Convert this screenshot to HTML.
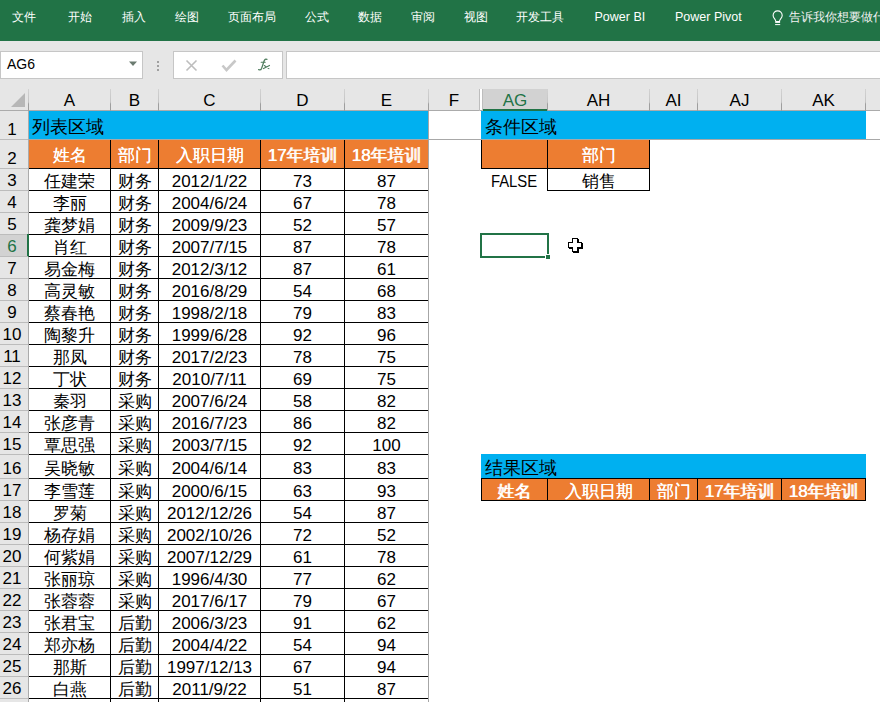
<!DOCTYPE html><html><head><meta charset="utf-8"><style>
html,body{margin:0;padding:0;width:880px;height:702px;overflow:hidden;background:#fff;font-family:"Liberation Sans", sans-serif;}
div{position:absolute;box-sizing:border-box;}
.t{white-space:nowrap;}
.rib{left:0;top:0;width:880px;height:41px;background:#217346;}
.tab{top:1px;height:32px;line-height:32px;font-size:12px;color:#fff;}
.hd{background:#e6e6e6;}
.ch{top:90px;height:21px;font-size:17px;line-height:21px;text-align:center;color:#000;}
.rn{left:0;width:28px;padding-right:4px;font-size:17px;text-align:center;color:#000;}
.c{font-size:16.5px;text-align:center;color:#000;} .n{font-size:17px;}
.w{color:#fff;text-shadow:0.6px 0 0 #fff;}
</style></head><body>
<div class="rib"></div>
<div class="tab t" style="left:12px;">文件</div>
<div class="tab t" style="left:68px;">开始</div>
<div class="tab t" style="left:122px;">插入</div>
<div class="tab t" style="left:174.5px;">绘图</div>
<div class="tab t" style="left:228px;">页面布局</div>
<div class="tab t" style="left:305px;">公式</div>
<div class="tab t" style="left:357.5px;">数据</div>
<div class="tab t" style="left:411px;">审阅</div>
<div class="tab t" style="left:464px;">视图</div>
<div class="tab t" style="left:516px;">开发工具</div>
<div class="tab t" style="left:594.5px;font-size:12.5px;">Power BI</div>
<div class="tab t" style="left:675px;font-size:12.5px;">Power Pivot</div>
<svg style="position:absolute;left:770px;top:8px" width="16" height="20" viewBox="0 0 16 20"><path d="M5.7 13C5.7 11.4 3.1 10 3.1 7.4A4.55 4.55 0 1 1 12.2 7.4C12.2 10 9.6 11.4 9.6 13" fill="none" stroke="#fff" stroke-width="1.1"/><rect x="5.2" y="13" width="4.9" height="1.9" fill="#fff"/><rect x="5.1" y="16.1" width="5.1" height="1" fill="#fff"/></svg>
<div class="tab t" style="left:789px;font-size:12.3px;color:#f2f2f2">告诉我你想要做什么</div>
<div class="hd" style="left:0;top:41px;width:880px;height:48px"></div>
<div style="left:0;top:51px;width:143px;height:28px;background:#fff;border:1px solid #c6c6c6"></div>
<div class="t" style="left:7px;top:50px;height:28px;line-height:28px;font-size:14px;color:#000">AG6</div>
<svg style="position:absolute;left:128px;top:61px" width="10" height="6"><path d="M1 0.5h8L5 5z" fill="#6b7b70"/></svg>
<div style="left:157px;top:61px;width:2px;height:2px;background:#a0a0a0"></div>
<div style="left:157px;top:65px;width:2px;height:2px;background:#a0a0a0"></div>
<div style="left:157px;top:69px;width:2px;height:2px;background:#a0a0a0"></div>
<div style="left:173px;top:51px;width:110px;height:28px;background:#fff;border:1px solid #c6c6c6"></div>
<svg style="position:absolute;left:185px;top:59px" width="14" height="13"><path d="M1.5 1.5l10 10M11.5 1.5l-10 10" stroke="#bdbdbd" stroke-width="1.6"/></svg>
<svg style="position:absolute;left:221px;top:59px" width="16" height="13"><path d="M1.5 6.5l4 4.5L14.5 1.5" fill="none" stroke="#c8c8c8" stroke-width="2.6"/></svg>
<svg style="position:absolute;left:256px;top:56px" width="16" height="16" viewBox="0 0 16 16"><g fill="none" stroke="#4f7d5e" stroke-linecap="round"><path d="M10.9 3.4C9.6 2.8 8.7 3.4 8.2 4.8L5.6 12.4C5.1 13.7 4.2 14.1 2.6 13.7" stroke-width="1.3"/><path d="M5.2 6.3H9.2" stroke-width="1.1"/><path d="M8.3 9.5L12.9 12.6M7.5 12.6L13.5 9.4" stroke-width="1.1"/></g></svg>
<div style="left:286px;top:51px;width:600px;height:28px;background:#fff;border:1px solid #c6c6c6"></div>
<div class="hd" style="left:0;top:89px;width:880px;height:22px"></div>
<div style="left:0;top:110px;width:880px;height:1px;background:#ababab"></div>
<svg style="position:absolute;left:10px;top:92px" width="16" height="16"><path d="M15 1V15H1z" fill="#b7b7b7"/></svg>
<div style="left:28px;top:89px;width:1px;height:22px;background:linear-gradient(#d2d2d2 0%,#c4c4c4 60%,#9e9e9e 68%,#9e9e9e 100%)"></div>
<div class="ch t" style="left:29px;width:81px;color:#000">A</div>
<div style="left:110px;top:89px;width:1px;height:22px;background:linear-gradient(#d2d2d2 0%,#c4c4c4 60%,#9e9e9e 68%,#9e9e9e 100%)"></div>
<div class="ch t" style="left:111px;width:47px;color:#000">B</div>
<div style="left:158px;top:89px;width:1px;height:22px;background:linear-gradient(#d2d2d2 0%,#c4c4c4 60%,#9e9e9e 68%,#9e9e9e 100%)"></div>
<div class="ch t" style="left:159px;width:101px;color:#000">C</div>
<div style="left:260px;top:89px;width:1px;height:22px;background:linear-gradient(#d2d2d2 0%,#c4c4c4 60%,#9e9e9e 68%,#9e9e9e 100%)"></div>
<div class="ch t" style="left:261px;width:83px;color:#000">D</div>
<div style="left:344px;top:89px;width:1px;height:22px;background:linear-gradient(#d2d2d2 0%,#c4c4c4 60%,#9e9e9e 68%,#9e9e9e 100%)"></div>
<div class="ch t" style="left:345px;width:83px;color:#000">E</div>
<div style="left:428px;top:89px;width:1px;height:22px;background:linear-gradient(#d2d2d2 0%,#c4c4c4 60%,#9e9e9e 68%,#9e9e9e 100%)"></div>
<div class="ch t" style="left:429px;width:50px;color:#000">F</div>
<div style="left:479px;top:89px;width:1px;height:22px;background:#bdbdbd"></div>
<div style="left:480px;top:89px;width:2px;height:21px;background:#fff"></div>
<div style="left:482px;top:89px;width:1px;height:22px;background:#bdbdbd"></div>
<div style="left:483px;top:89px;width:64px;height:21px;background:#d2d2d2"></div>
<div style="left:483px;top:109px;width:64px;height:2px;background:#217346"></div>
<div class="ch t" style="left:483px;width:64px;color:#217346">AG</div>
<div style="left:547px;top:89px;width:1px;height:22px;background:linear-gradient(#d2d2d2 0%,#c4c4c4 60%,#9e9e9e 68%,#9e9e9e 100%)"></div>
<div class="ch t" style="left:548px;width:101px;color:#000">AH</div>
<div style="left:649px;top:89px;width:1px;height:22px;background:linear-gradient(#d2d2d2 0%,#c4c4c4 60%,#9e9e9e 68%,#9e9e9e 100%)"></div>
<div class="ch t" style="left:650px;width:47px;color:#000">AI</div>
<div style="left:697px;top:89px;width:1px;height:22px;background:linear-gradient(#d2d2d2 0%,#c4c4c4 60%,#9e9e9e 68%,#9e9e9e 100%)"></div>
<div class="ch t" style="left:698px;width:83px;color:#000">AJ</div>
<div style="left:781px;top:89px;width:1px;height:22px;background:linear-gradient(#d2d2d2 0%,#c4c4c4 60%,#9e9e9e 68%,#9e9e9e 100%)"></div>
<div class="ch t" style="left:782px;width:83px;color:#000">AK</div>
<div style="left:865px;top:89px;width:1px;height:22px;background:linear-gradient(#d2d2d2 0%,#c4c4c4 60%,#9e9e9e 68%,#9e9e9e 100%)"></div>
<div class="hd" style="left:0;top:111px;width:28px;height:591px"></div>
<div style="left:28px;top:111px;width:1px;height:591px;background:#ababab"></div>
<div style="left:0;top:139px;width:28px;height:1px;background:#bcbcbc"></div>
<div class="rn t" style="top:119px;height:22px;line-height:22px;color:#000;padding-top:0px">1</div>
<div style="left:0;top:168px;width:28px;height:1px;background:#bcbcbc"></div>
<div class="rn t" style="top:148px;height:22px;line-height:22px;color:#000;padding-top:0px">2</div>
<div style="left:0;top:190px;width:28px;height:1px;background:#bcbcbc"></div>
<div class="rn t" style="top:170px;height:22px;line-height:22px;color:#000;padding-top:0px">3</div>
<div style="left:0;top:212px;width:28px;height:1px;background:#bcbcbc"></div>
<div class="rn t" style="top:192px;height:22px;line-height:22px;color:#000;padding-top:0px">4</div>
<div style="left:0;top:234px;width:28px;height:1px;background:#bcbcbc"></div>
<div class="rn t" style="top:214px;height:22px;line-height:22px;color:#000;padding-top:0px">5</div>
<div style="left:0;top:235px;width:28px;height:21px;background:#d2d2d2"></div>
<div style="left:27px;top:234px;width:2px;height:23px;background:#217346"></div>
<div style="left:0;top:256px;width:28px;height:1px;background:#bcbcbc"></div>
<div class="rn t" style="top:236px;height:22px;line-height:22px;color:#217346;padding-top:0px">6</div>
<div style="left:0;top:278px;width:28px;height:1px;background:#bcbcbc"></div>
<div class="rn t" style="top:258px;height:22px;line-height:22px;color:#000;padding-top:0px">7</div>
<div style="left:0;top:300px;width:28px;height:1px;background:#bcbcbc"></div>
<div class="rn t" style="top:280px;height:22px;line-height:22px;color:#000;padding-top:0px">8</div>
<div style="left:0;top:322px;width:28px;height:1px;background:#bcbcbc"></div>
<div class="rn t" style="top:302px;height:22px;line-height:22px;color:#000;padding-top:0px">9</div>
<div style="left:0;top:344px;width:28px;height:1px;background:#bcbcbc"></div>
<div class="rn t" style="top:324px;height:22px;line-height:22px;color:#000;padding-top:0px">10</div>
<div style="left:0;top:366px;width:28px;height:1px;background:#bcbcbc"></div>
<div class="rn t" style="top:346px;height:22px;line-height:22px;color:#000;padding-top:0px">11</div>
<div style="left:0;top:388px;width:28px;height:1px;background:#bcbcbc"></div>
<div class="rn t" style="top:368px;height:22px;line-height:22px;color:#000;padding-top:0px">12</div>
<div style="left:0;top:410px;width:28px;height:1px;background:#bcbcbc"></div>
<div class="rn t" style="top:390px;height:22px;line-height:22px;color:#000;padding-top:0px">13</div>
<div style="left:0;top:432px;width:28px;height:1px;background:#bcbcbc"></div>
<div class="rn t" style="top:412px;height:22px;line-height:22px;color:#000;padding-top:0px">14</div>
<div style="left:0;top:454px;width:28px;height:1px;background:#bcbcbc"></div>
<div class="rn t" style="top:434px;height:22px;line-height:22px;color:#000;padding-top:0px">15</div>
<div style="left:0;top:478px;width:28px;height:1px;background:#bcbcbc"></div>
<div class="rn t" style="top:458px;height:22px;line-height:22px;color:#000;padding-top:0px">16</div>
<div style="left:0;top:500px;width:28px;height:1px;background:#bcbcbc"></div>
<div class="rn t" style="top:480px;height:22px;line-height:22px;color:#000;padding-top:0px">17</div>
<div style="left:0;top:522px;width:28px;height:1px;background:#bcbcbc"></div>
<div class="rn t" style="top:502px;height:22px;line-height:22px;color:#000;padding-top:0px">18</div>
<div style="left:0;top:544px;width:28px;height:1px;background:#bcbcbc"></div>
<div class="rn t" style="top:524px;height:22px;line-height:22px;color:#000;padding-top:0px">19</div>
<div style="left:0;top:566px;width:28px;height:1px;background:#bcbcbc"></div>
<div class="rn t" style="top:546px;height:22px;line-height:22px;color:#000;padding-top:0px">20</div>
<div style="left:0;top:588px;width:28px;height:1px;background:#bcbcbc"></div>
<div class="rn t" style="top:568px;height:22px;line-height:22px;color:#000;padding-top:0px">21</div>
<div style="left:0;top:610px;width:28px;height:1px;background:#bcbcbc"></div>
<div class="rn t" style="top:590px;height:22px;line-height:22px;color:#000;padding-top:0px">22</div>
<div style="left:0;top:632px;width:28px;height:1px;background:#bcbcbc"></div>
<div class="rn t" style="top:612px;height:22px;line-height:22px;color:#000;padding-top:0px">23</div>
<div style="left:0;top:654px;width:28px;height:1px;background:#bcbcbc"></div>
<div class="rn t" style="top:634px;height:22px;line-height:22px;color:#000;padding-top:0px">24</div>
<div style="left:0;top:676px;width:28px;height:1px;background:#bcbcbc"></div>
<div class="rn t" style="top:656px;height:22px;line-height:22px;color:#000;padding-top:0px">25</div>
<div style="left:0;top:698px;width:28px;height:1px;background:#bcbcbc"></div>
<div class="rn t" style="top:678px;height:22px;line-height:22px;color:#000;padding-top:0px">26</div>
<div style="left:29px;top:111px;width:399px;height:29px;background:#00b0f0"></div>
<div class="t" style="left:32px;top:111px;height:28px;line-height:28px;font-size:18px;color:#000;padding-top:2px">列表区域</div>
<div style="left:29px;top:140px;width:399px;height:29px;background:#ed7d31"></div>
<div style="left:29px;top:139px;width:851px;height:1px;background:#a8a8a8"></div>
<div style="left:428px;top:111px;width:1px;height:591px;background:#a6a6a6"></div>
<div style="left:29px;top:168px;width:399px;height:1px;background:#000"></div>
<div style="left:29px;top:190px;width:399px;height:1px;background:#000"></div>
<div style="left:29px;top:212px;width:399px;height:1px;background:#000"></div>
<div style="left:29px;top:234px;width:399px;height:1px;background:#000"></div>
<div style="left:29px;top:256px;width:399px;height:1px;background:#000"></div>
<div style="left:29px;top:278px;width:399px;height:1px;background:#000"></div>
<div style="left:29px;top:300px;width:399px;height:1px;background:#000"></div>
<div style="left:29px;top:322px;width:399px;height:1px;background:#000"></div>
<div style="left:29px;top:344px;width:399px;height:1px;background:#000"></div>
<div style="left:29px;top:366px;width:399px;height:1px;background:#000"></div>
<div style="left:29px;top:388px;width:399px;height:1px;background:#000"></div>
<div style="left:29px;top:410px;width:399px;height:1px;background:#000"></div>
<div style="left:29px;top:432px;width:399px;height:1px;background:#000"></div>
<div style="left:29px;top:454px;width:399px;height:1px;background:#000"></div>
<div style="left:29px;top:478px;width:399px;height:1px;background:#000"></div>
<div style="left:29px;top:500px;width:399px;height:1px;background:#000"></div>
<div style="left:29px;top:522px;width:399px;height:1px;background:#000"></div>
<div style="left:29px;top:544px;width:399px;height:1px;background:#000"></div>
<div style="left:29px;top:566px;width:399px;height:1px;background:#000"></div>
<div style="left:29px;top:588px;width:399px;height:1px;background:#000"></div>
<div style="left:29px;top:610px;width:399px;height:1px;background:#000"></div>
<div style="left:29px;top:632px;width:399px;height:1px;background:#000"></div>
<div style="left:29px;top:654px;width:399px;height:1px;background:#000"></div>
<div style="left:29px;top:676px;width:399px;height:1px;background:#000"></div>
<div style="left:29px;top:698px;width:399px;height:1px;background:#000"></div>
<div style="left:110px;top:140px;width:1px;height:562px;background:#000"></div>
<div style="left:158px;top:140px;width:1px;height:562px;background:#000"></div>
<div style="left:260px;top:140px;width:1px;height:562px;background:#000"></div>
<div style="left:344px;top:140px;width:1px;height:562px;background:#000"></div>
<div class="c w t" style="left:29px;width:81px;top:143.5px;height:22px;line-height:22px;">姓名</div>
<div class="c w t" style="left:111px;width:47px;top:143.5px;height:22px;line-height:22px;">部门</div>
<div class="c w t" style="left:159px;width:101px;top:143.5px;height:22px;line-height:22px;">入职日期</div>
<div class="c w t" style="left:261px;width:83px;top:143.5px;height:22px;line-height:22px;"><span class="n">17</span>年培训</div>
<div class="c w t" style="left:345px;width:83px;top:143.5px;height:22px;line-height:22px;"><span class="n">18</span>年培训</div>
<div class="c t" style="left:29px;width:81px;top:169.5px;height:22px;line-height:22px;">任建荣</div>
<div class="c t" style="left:111px;width:47px;top:169.5px;height:22px;line-height:22px;">财务</div>
<div class="c t" style="left:159px;width:101px;top:169.5px;height:22px;line-height:22px;"><span class="n">2012/1/22</span></div>
<div class="c t" style="left:261px;width:83px;top:169.5px;height:22px;line-height:22px;"><span class="n">73</span></div>
<div class="c t" style="left:345px;width:83px;top:169.5px;height:22px;line-height:22px;"><span class="n">87</span></div>
<div class="c t" style="left:29px;width:81px;top:191.5px;height:22px;line-height:22px;">李丽</div>
<div class="c t" style="left:111px;width:47px;top:191.5px;height:22px;line-height:22px;">财务</div>
<div class="c t" style="left:159px;width:101px;top:191.5px;height:22px;line-height:22px;"><span class="n">2004/6/24</span></div>
<div class="c t" style="left:261px;width:83px;top:191.5px;height:22px;line-height:22px;"><span class="n">67</span></div>
<div class="c t" style="left:345px;width:83px;top:191.5px;height:22px;line-height:22px;"><span class="n">78</span></div>
<div class="c t" style="left:29px;width:81px;top:213.5px;height:22px;line-height:22px;">龚梦娟</div>
<div class="c t" style="left:111px;width:47px;top:213.5px;height:22px;line-height:22px;">财务</div>
<div class="c t" style="left:159px;width:101px;top:213.5px;height:22px;line-height:22px;"><span class="n">2009/9/23</span></div>
<div class="c t" style="left:261px;width:83px;top:213.5px;height:22px;line-height:22px;"><span class="n">52</span></div>
<div class="c t" style="left:345px;width:83px;top:213.5px;height:22px;line-height:22px;"><span class="n">57</span></div>
<div class="c t" style="left:29px;width:81px;top:235.5px;height:22px;line-height:22px;">肖红</div>
<div class="c t" style="left:111px;width:47px;top:235.5px;height:22px;line-height:22px;">财务</div>
<div class="c t" style="left:159px;width:101px;top:235.5px;height:22px;line-height:22px;"><span class="n">2007/7/15</span></div>
<div class="c t" style="left:261px;width:83px;top:235.5px;height:22px;line-height:22px;"><span class="n">87</span></div>
<div class="c t" style="left:345px;width:83px;top:235.5px;height:22px;line-height:22px;"><span class="n">78</span></div>
<div class="c t" style="left:29px;width:81px;top:257.5px;height:22px;line-height:22px;">易金梅</div>
<div class="c t" style="left:111px;width:47px;top:257.5px;height:22px;line-height:22px;">财务</div>
<div class="c t" style="left:159px;width:101px;top:257.5px;height:22px;line-height:22px;"><span class="n">2012/3/12</span></div>
<div class="c t" style="left:261px;width:83px;top:257.5px;height:22px;line-height:22px;"><span class="n">87</span></div>
<div class="c t" style="left:345px;width:83px;top:257.5px;height:22px;line-height:22px;"><span class="n">61</span></div>
<div class="c t" style="left:29px;width:81px;top:279.5px;height:22px;line-height:22px;">高灵敏</div>
<div class="c t" style="left:111px;width:47px;top:279.5px;height:22px;line-height:22px;">财务</div>
<div class="c t" style="left:159px;width:101px;top:279.5px;height:22px;line-height:22px;"><span class="n">2016/8/29</span></div>
<div class="c t" style="left:261px;width:83px;top:279.5px;height:22px;line-height:22px;"><span class="n">54</span></div>
<div class="c t" style="left:345px;width:83px;top:279.5px;height:22px;line-height:22px;"><span class="n">68</span></div>
<div class="c t" style="left:29px;width:81px;top:301.5px;height:22px;line-height:22px;">蔡春艳</div>
<div class="c t" style="left:111px;width:47px;top:301.5px;height:22px;line-height:22px;">财务</div>
<div class="c t" style="left:159px;width:101px;top:301.5px;height:22px;line-height:22px;"><span class="n">1998/2/18</span></div>
<div class="c t" style="left:261px;width:83px;top:301.5px;height:22px;line-height:22px;"><span class="n">79</span></div>
<div class="c t" style="left:345px;width:83px;top:301.5px;height:22px;line-height:22px;"><span class="n">83</span></div>
<div class="c t" style="left:29px;width:81px;top:323.5px;height:22px;line-height:22px;">陶黎升</div>
<div class="c t" style="left:111px;width:47px;top:323.5px;height:22px;line-height:22px;">财务</div>
<div class="c t" style="left:159px;width:101px;top:323.5px;height:22px;line-height:22px;"><span class="n">1999/6/28</span></div>
<div class="c t" style="left:261px;width:83px;top:323.5px;height:22px;line-height:22px;"><span class="n">92</span></div>
<div class="c t" style="left:345px;width:83px;top:323.5px;height:22px;line-height:22px;"><span class="n">96</span></div>
<div class="c t" style="left:29px;width:81px;top:345.5px;height:22px;line-height:22px;">那凤</div>
<div class="c t" style="left:111px;width:47px;top:345.5px;height:22px;line-height:22px;">财务</div>
<div class="c t" style="left:159px;width:101px;top:345.5px;height:22px;line-height:22px;"><span class="n">2017/2/23</span></div>
<div class="c t" style="left:261px;width:83px;top:345.5px;height:22px;line-height:22px;"><span class="n">78</span></div>
<div class="c t" style="left:345px;width:83px;top:345.5px;height:22px;line-height:22px;"><span class="n">75</span></div>
<div class="c t" style="left:29px;width:81px;top:367.5px;height:22px;line-height:22px;">丁状</div>
<div class="c t" style="left:111px;width:47px;top:367.5px;height:22px;line-height:22px;">财务</div>
<div class="c t" style="left:159px;width:101px;top:367.5px;height:22px;line-height:22px;"><span class="n">2010/7/11</span></div>
<div class="c t" style="left:261px;width:83px;top:367.5px;height:22px;line-height:22px;"><span class="n">69</span></div>
<div class="c t" style="left:345px;width:83px;top:367.5px;height:22px;line-height:22px;"><span class="n">75</span></div>
<div class="c t" style="left:29px;width:81px;top:389.5px;height:22px;line-height:22px;">秦羽</div>
<div class="c t" style="left:111px;width:47px;top:389.5px;height:22px;line-height:22px;">采购</div>
<div class="c t" style="left:159px;width:101px;top:389.5px;height:22px;line-height:22px;"><span class="n">2007/6/24</span></div>
<div class="c t" style="left:261px;width:83px;top:389.5px;height:22px;line-height:22px;"><span class="n">58</span></div>
<div class="c t" style="left:345px;width:83px;top:389.5px;height:22px;line-height:22px;"><span class="n">82</span></div>
<div class="c t" style="left:29px;width:81px;top:411.5px;height:22px;line-height:22px;">张彦青</div>
<div class="c t" style="left:111px;width:47px;top:411.5px;height:22px;line-height:22px;">采购</div>
<div class="c t" style="left:159px;width:101px;top:411.5px;height:22px;line-height:22px;"><span class="n">2016/7/23</span></div>
<div class="c t" style="left:261px;width:83px;top:411.5px;height:22px;line-height:22px;"><span class="n">86</span></div>
<div class="c t" style="left:345px;width:83px;top:411.5px;height:22px;line-height:22px;"><span class="n">82</span></div>
<div class="c t" style="left:29px;width:81px;top:433.5px;height:22px;line-height:22px;">覃思强</div>
<div class="c t" style="left:111px;width:47px;top:433.5px;height:22px;line-height:22px;">采购</div>
<div class="c t" style="left:159px;width:101px;top:433.5px;height:22px;line-height:22px;"><span class="n">2003/7/15</span></div>
<div class="c t" style="left:261px;width:83px;top:433.5px;height:22px;line-height:22px;"><span class="n">92</span></div>
<div class="c t" style="left:345px;width:83px;top:433.5px;height:22px;line-height:22px;"><span class="n">100</span></div>
<div class="c t" style="left:29px;width:81px;top:456.5px;height:22px;line-height:22px;">吴晓敏</div>
<div class="c t" style="left:111px;width:47px;top:456.5px;height:22px;line-height:22px;">采购</div>
<div class="c t" style="left:159px;width:101px;top:456.5px;height:22px;line-height:22px;"><span class="n">2004/6/14</span></div>
<div class="c t" style="left:261px;width:83px;top:456.5px;height:22px;line-height:22px;"><span class="n">83</span></div>
<div class="c t" style="left:345px;width:83px;top:456.5px;height:22px;line-height:22px;"><span class="n">83</span></div>
<div class="c t" style="left:29px;width:81px;top:479.5px;height:22px;line-height:22px;">李雪莲</div>
<div class="c t" style="left:111px;width:47px;top:479.5px;height:22px;line-height:22px;">采购</div>
<div class="c t" style="left:159px;width:101px;top:479.5px;height:22px;line-height:22px;"><span class="n">2000/6/15</span></div>
<div class="c t" style="left:261px;width:83px;top:479.5px;height:22px;line-height:22px;"><span class="n">63</span></div>
<div class="c t" style="left:345px;width:83px;top:479.5px;height:22px;line-height:22px;"><span class="n">93</span></div>
<div class="c t" style="left:29px;width:81px;top:501.5px;height:22px;line-height:22px;">罗菊</div>
<div class="c t" style="left:111px;width:47px;top:501.5px;height:22px;line-height:22px;">采购</div>
<div class="c t" style="left:159px;width:101px;top:501.5px;height:22px;line-height:22px;"><span class="n">2012/12/26</span></div>
<div class="c t" style="left:261px;width:83px;top:501.5px;height:22px;line-height:22px;"><span class="n">54</span></div>
<div class="c t" style="left:345px;width:83px;top:501.5px;height:22px;line-height:22px;"><span class="n">87</span></div>
<div class="c t" style="left:29px;width:81px;top:523.5px;height:22px;line-height:22px;">杨存娟</div>
<div class="c t" style="left:111px;width:47px;top:523.5px;height:22px;line-height:22px;">采购</div>
<div class="c t" style="left:159px;width:101px;top:523.5px;height:22px;line-height:22px;"><span class="n">2002/10/26</span></div>
<div class="c t" style="left:261px;width:83px;top:523.5px;height:22px;line-height:22px;"><span class="n">72</span></div>
<div class="c t" style="left:345px;width:83px;top:523.5px;height:22px;line-height:22px;"><span class="n">52</span></div>
<div class="c t" style="left:29px;width:81px;top:545.5px;height:22px;line-height:22px;">何紫娟</div>
<div class="c t" style="left:111px;width:47px;top:545.5px;height:22px;line-height:22px;">采购</div>
<div class="c t" style="left:159px;width:101px;top:545.5px;height:22px;line-height:22px;"><span class="n">2007/12/29</span></div>
<div class="c t" style="left:261px;width:83px;top:545.5px;height:22px;line-height:22px;"><span class="n">61</span></div>
<div class="c t" style="left:345px;width:83px;top:545.5px;height:22px;line-height:22px;"><span class="n">78</span></div>
<div class="c t" style="left:29px;width:81px;top:567.5px;height:22px;line-height:22px;">张丽琼</div>
<div class="c t" style="left:111px;width:47px;top:567.5px;height:22px;line-height:22px;">采购</div>
<div class="c t" style="left:159px;width:101px;top:567.5px;height:22px;line-height:22px;"><span class="n">1996/4/30</span></div>
<div class="c t" style="left:261px;width:83px;top:567.5px;height:22px;line-height:22px;"><span class="n">77</span></div>
<div class="c t" style="left:345px;width:83px;top:567.5px;height:22px;line-height:22px;"><span class="n">62</span></div>
<div class="c t" style="left:29px;width:81px;top:589.5px;height:22px;line-height:22px;">张蓉蓉</div>
<div class="c t" style="left:111px;width:47px;top:589.5px;height:22px;line-height:22px;">采购</div>
<div class="c t" style="left:159px;width:101px;top:589.5px;height:22px;line-height:22px;"><span class="n">2017/6/17</span></div>
<div class="c t" style="left:261px;width:83px;top:589.5px;height:22px;line-height:22px;"><span class="n">79</span></div>
<div class="c t" style="left:345px;width:83px;top:589.5px;height:22px;line-height:22px;"><span class="n">67</span></div>
<div class="c t" style="left:29px;width:81px;top:611.5px;height:22px;line-height:22px;">张君宝</div>
<div class="c t" style="left:111px;width:47px;top:611.5px;height:22px;line-height:22px;">后勤</div>
<div class="c t" style="left:159px;width:101px;top:611.5px;height:22px;line-height:22px;"><span class="n">2006/3/23</span></div>
<div class="c t" style="left:261px;width:83px;top:611.5px;height:22px;line-height:22px;"><span class="n">91</span></div>
<div class="c t" style="left:345px;width:83px;top:611.5px;height:22px;line-height:22px;"><span class="n">62</span></div>
<div class="c t" style="left:29px;width:81px;top:633.5px;height:22px;line-height:22px;">郑亦杨</div>
<div class="c t" style="left:111px;width:47px;top:633.5px;height:22px;line-height:22px;">后勤</div>
<div class="c t" style="left:159px;width:101px;top:633.5px;height:22px;line-height:22px;"><span class="n">2004/4/22</span></div>
<div class="c t" style="left:261px;width:83px;top:633.5px;height:22px;line-height:22px;"><span class="n">54</span></div>
<div class="c t" style="left:345px;width:83px;top:633.5px;height:22px;line-height:22px;"><span class="n">94</span></div>
<div class="c t" style="left:29px;width:81px;top:655.5px;height:22px;line-height:22px;">那斯</div>
<div class="c t" style="left:111px;width:47px;top:655.5px;height:22px;line-height:22px;">后勤</div>
<div class="c t" style="left:159px;width:101px;top:655.5px;height:22px;line-height:22px;"><span class="n">1997/12/13</span></div>
<div class="c t" style="left:261px;width:83px;top:655.5px;height:22px;line-height:22px;"><span class="n">67</span></div>
<div class="c t" style="left:345px;width:83px;top:655.5px;height:22px;line-height:22px;"><span class="n">94</span></div>
<div class="c t" style="left:29px;width:81px;top:677.5px;height:22px;line-height:22px;">白燕</div>
<div class="c t" style="left:111px;width:47px;top:677.5px;height:22px;line-height:22px;">后勤</div>
<div class="c t" style="left:159px;width:101px;top:677.5px;height:22px;line-height:22px;"><span class="n">2011/9/22</span></div>
<div class="c t" style="left:261px;width:83px;top:677.5px;height:22px;line-height:22px;"><span class="n">51</span></div>
<div class="c t" style="left:345px;width:83px;top:677.5px;height:22px;line-height:22px;"><span class="n">87</span></div>
<div style="left:481px;top:111px;width:385px;height:28px;background:#00b0f0"></div>
<div class="t" style="left:485px;top:111px;height:28px;line-height:28px;font-size:18px;color:#000;padding-top:2px">条件区域</div>
<div style="left:481px;top:140px;width:169px;height:29px;background:#ed7d31;border-left:1px solid #000;border-right:1px solid #000;border-bottom:1px solid #000"></div>
<div style="left:547px;top:140px;width:1px;height:51px;background:#000"></div>
<div style="left:547px;top:190px;width:103px;height:1px;background:#000"></div>
<div style="left:649px;top:168px;width:1px;height:23px;background:#000"></div>
<div class="c w t" style="left:548px;width:101px;top:143.5px;height:22px;line-height:22px;">部门</div>
<div class="c t" style="left:548px;width:101px;top:169.5px;height:22px;line-height:22px;">销售</div>
<div class="c t" style="left:481px;width:66px;top:169.5px;height:22px;line-height:22px;transform:scaleX(0.9)">FALSE</div>
<div style="left:480px;top:233px;width:69px;height:25px;border:2px solid #217346"></div>
<div style="left:545px;top:254px;width:6px;height:6px;background:#217346;border:1px solid #fff"></div>
<svg style="position:absolute;left:566px;top:236px" width="20" height="20" viewBox="0 0 20 20" shape-rendering="crispEdges"><path d="M7 3h6v4h4v6h-4v4h-6v-4h-4v-6h4z" fill="#000"/><path d="M6 2h6v4h4v6h-4v4h-6v-4h-4v-6h4z" fill="#000"/><path d="M7 3h4v4h4v4h-4v4h-4v-4h-4v-4h4z" fill="#fff"/></svg>
<div style="left:481px;top:454px;width:385px;height:24px;background:#00b0f0"></div>
<div class="t" style="left:485px;top:454px;height:24px;line-height:24px;font-size:18px;color:#000;padding-top:2px">结果区域</div>
<div style="left:481px;top:478px;width:385px;height:23px;background:#ed7d31;border:1px solid #000"></div>
<div style="left:547px;top:478px;width:1px;height:23px;background:#000"></div>
<div style="left:649px;top:478px;width:1px;height:23px;background:#000"></div>
<div style="left:697px;top:478px;width:1px;height:23px;background:#000"></div>
<div style="left:781px;top:478px;width:1px;height:23px;background:#000"></div>
<div class="c w t" style="left:481px;width:66px;top:480px;height:22px;line-height:22px;">姓名</div>
<div class="c w t" style="left:548px;width:101px;top:480px;height:22px;line-height:22px;">入职日期</div>
<div class="c w t" style="left:650px;width:47px;top:480px;height:22px;line-height:22px;">部门</div>
<div class="c w t" style="left:698px;width:83px;top:480px;height:22px;line-height:22px;"><span class="n">17</span>年培训</div>
<div class="c w t" style="left:782px;width:83px;top:480px;height:22px;line-height:22px;"><span class="n">18</span>年培训</div>
</body></html>
